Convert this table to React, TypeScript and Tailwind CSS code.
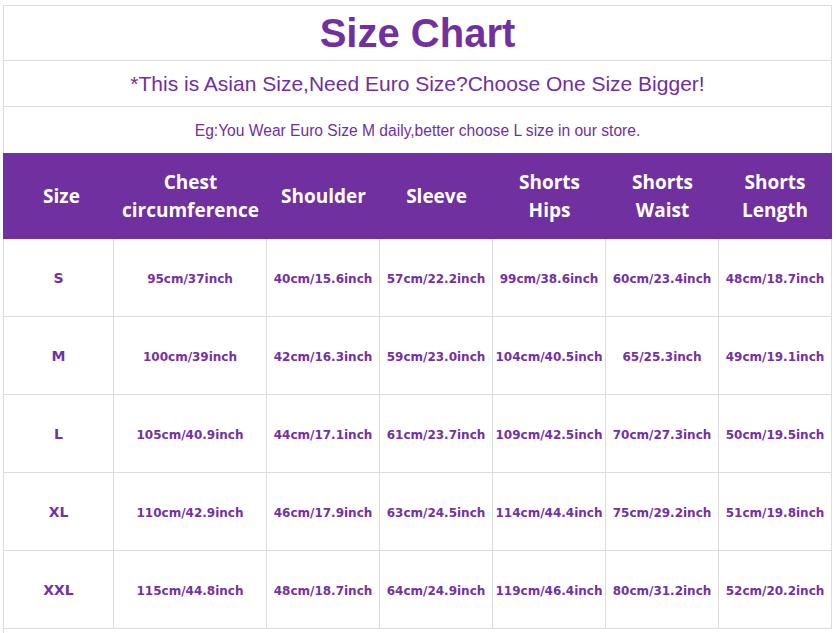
const headers = [
  ["Size"],
  ["Chest", "circumference"],
  ["Shoulder"],
  ["Sleeve"],
  ["Shorts", "Hips"],
  ["Shorts", "Waist"],
  ["Shorts", "Length"],
];

const rows = [
  ["S", "95cm/37inch", "40cm/15.6inch", "57cm/22.2inch", "99cm/38.6inch", "60cm/23.4inch", "48cm/18.7inch"],
  ["M", "100cm/39inch", "42cm/16.3inch", "59cm/23.0inch", "104cm/40.5inch", "65/25.3inch", "49cm/19.1inch"],
  ["L", "105cm/40.9inch", "44cm/17.1inch", "61cm/23.7inch", "109cm/42.5inch", "70cm/27.3inch", "50cm/19.5inch"],
  ["XL", "110cm/42.9inch", "46cm/17.9inch", "63cm/24.5inch", "114cm/44.4inch", "75cm/29.2inch", "51cm/19.8inch"],
  ["XXL", "115cm/44.8inch", "48cm/18.7inch", "64cm/24.9inch", "119cm/46.4inch", "80cm/31.2inch", "52cm/20.2inch"],
];

const cols = "grid grid-cols-[110px_153px_113px_113px_113px_113px_112px]";

export default function App() {
  return (
    <div className="min-h-[633px] bg-white pt-[5px] pl-[3px] font-['Liberation_Sans',Arial,sans-serif] text-[#7030a0]">
      <div className="w-[829px]">
        <div className="flex h-[56px] items-center justify-center border border-[#dcdcdc] text-[40px] leading-none font-bold">
          Size Chart
        </div>
        <div className="flex h-[46px] items-center justify-center border-x border-b border-[#dcdcdc] text-[21px]">
          *This is Asian Size,Need Euro Size?Choose One Size Bigger!
        </div>
        <div className="flex h-[46px] items-center justify-center border-x border-[#dcdcdc] pt-px text-[15.6px]">
          Eg:You Wear Euro Size M daily,better choose L size in our store.
        </div>

        <div className={`${cols} h-[86px] bg-[#7030a0] pl-px font-['Open_Sans',sans-serif] text-[19px] leading-[28px] font-bold text-white`}>
          {headers.map((h, i) => (
            <div key={i} className={`flex flex-col items-center justify-center text-center ${i === 0 ? "pl-[5px]" : ""}`}>
              {h.map((line) => (
                <span key={line}>{line}</span>
              ))}
            </div>
          ))}
        </div>

        <div className="border-x border-[#dcdcdc] font-['DejaVu_Sans',sans-serif] font-bold text-[#7332a2]">
          {rows.map((r, ri) => (
            <div key={ri} className={`${cols} h-[78px] border-b border-[#dcdcdc]`}>
              {r.map((cell, ci) => (
                <div
                  key={ci}
                  className={`flex items-center justify-center pt-[2px] ${ci === 0 ? "text-[14px]" : "text-[12px]"} ${ci < 6 ? "border-r border-[#dcdcdc]" : ""}`}
                >
                  {cell}
                </div>
              ))}
            </div>
          ))}
        </div>
        <div className="h-[5px] border-l border-[#dcdcdc]" />
      </div>
    </div>
  );
}
